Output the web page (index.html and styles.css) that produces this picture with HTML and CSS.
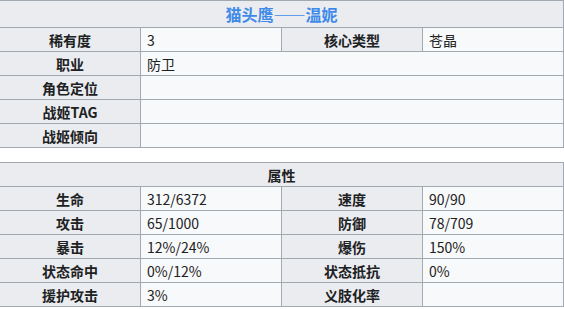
FILE: index.html
```html
<!DOCTYPE html>
<html lang="zh">
<head>
<meta charset="utf-8">
<link rel="stylesheet" href="styles.css">
</head>
<body>
<table class="wikitable">
  <tr><th class="title" colspan="4">猫头鹰——温妮</th></tr>
  <tr><th>稀有度</th><td>3</td><th>核心类型</th><td>苍晶</td></tr>
  <tr><th>职业</th><td colspan="3">防卫</td></tr>
  <tr><th>角色定位</th><td colspan="3"></td></tr>
  <tr><th>战姬TAG</th><td colspan="3"></td></tr>
  <tr><th>战姬倾向</th><td colspan="3"></td></tr>
</table>
<table class="wikitable second">
  <tr><th class="head" colspan="4">属性</th></tr>
  <tr><th>生命</th><td>312/6372</td><th>速度</th><td>90/90</td></tr>
  <tr><th>攻击</th><td>65/1000</td><th>防御</th><td>78/709</td></tr>
  <tr><th>暴击</th><td>12%/24%</td><th>爆伤</th><td>150%</td></tr>
  <tr><th>状态命中</th><td>0%/12%</td><th>状态抵抗</th><td>0%</td></tr>
  <tr><th>援护攻击</th><td>3%</td><th>义肢化率</th><td></td></tr>
</table>
</body>
</html>
```
FILE: styles.css
```css
html, body {
  margin: 0;
  padding: 0;
  background: #ffffff;
}
body {
  font-family: "Noto Sans CJK SC", "Noto Sans", sans-serif;
  font-size: 14px;
  color: #202122;
  overflow: hidden;
}
.wikitable {
  border-collapse: collapse;
  table-layout: fixed;
  width: 565px;
  margin-left: -1px;
  border: 1px solid #a2a9b1;
}
.wikitable.second {
  margin-top: 14px;
}
.wikitable th,
.wikitable td {
  border: 1px solid #a2a9b1;
  height: 24px;
  padding: 0 6px;
  line-height: 18px;
  box-sizing: border-box;
  vertical-align: middle;
}
.wikitable th {
  background: #eaecf0;
  font-weight: bold;
  text-align: center;
}
.wikitable td {
  background: #f8f9fa;
  text-align: left;
}
.wikitable th.title {
  height: 27px;
  font-size: 16px;
  color: #3f8ae8;
}
.wikitable th.head {
  height: 24px;
}
```
